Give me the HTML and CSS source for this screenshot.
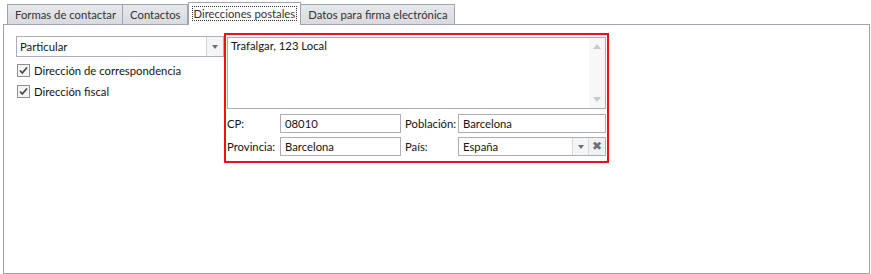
FILE: index.html
```html
<!DOCTYPE html>
<html lang="es">
<head>
    <meta charset="UTF-8">
    <meta name="viewport" content="width=device-width, initial-scale=1.0">
    <link rel="stylesheet" href="styles.css">
    <title>Direcciones postales</title>
</head>
<body>
    <div class="tabs">
        <div class="tab">Formas de contactar</div>
        <div class="tab">Contactos</div>
        <div class="tab active"><span class="focus">Direcciones postales</span></div>
        <div class="tab">Datos para firma electrónica</div>
    </div>

    <div class="panel">
        <div class="leftCol">
            <div class="combo">
                <div class="comboText">Particular</div>
                <div class="comboBtn"><span class="arrow"></span></div>
            </div>
            <label class="check">
                <svg width="13" height="13" viewBox="0 0 13 13">
                    <rect x="0.5" y="0.5" width="12" height="12" fill="#f4f4f4" stroke="#8e8f8f"/>
                    <path d="M3 6.5 L5.3 9 L10 3.5" fill="none" stroke="#4a4a4a" stroke-width="1.8"/>
                </svg>
                Dirección de correspondencia
            </label>
            <label class="check">
                <svg width="13" height="13" viewBox="0 0 13 13">
                    <rect x="0.5" y="0.5" width="12" height="12" fill="#f4f4f4" stroke="#8e8f8f"/>
                    <path d="M3 6.5 L5.3 9 L10 3.5" fill="none" stroke="#4a4a4a" stroke-width="1.8"/>
                </svg>
                Dirección fiscal
            </label>
        </div>

        <div class="addressBox">
            <div class="memo">
                <div class="memoText">Trafalgar, 123 Local</div>
                <div class="scroll">
                    <span class="up"></span>
                    <span class="down"></span>
                </div>
            </div>
            <div class="fields">
                <span class="lbl">CP:</span>
                <div class="field">08010</div>
                <span class="lbl lblRight">Población:</span>
                <div class="field">Barcelona</div>

                <span class="lbl">Provincia:</span>
                <div class="field">Barcelona</div>
                <span class="lbl lblRight">País:</span>
                <div class="field fieldCombo">
                    <div class="comboText">España</div>
                    <div class="comboBtn"><span class="arrow"></span></div>
                    <div class="clearBtn">&#x2716;</div>
                </div>
            </div>
        </div>
    </div>
</body>
</html>
```

FILE: styles.css
```css
:root {
    --border: #a0a5ad;
    --field-border: #abb0b8;
    --text: #141414;
}

body {
    margin: 0;
    background-color: white;
    font-family: 'Lato', 'Open Sans', sans-serif;
    font-size: 11.3px;
    color: var(--text);
}

.tabs {
    display: flex;
    align-items: flex-end;
    height: 24px;
    padding-left: 7px;
}

.tab {
    height: 20px;
    line-height: 19px;
    padding: 0 6px 0 7px;
    box-sizing: border-box;
    background: linear-gradient(#e6e8ec, #d7dbe0);
    border: 1px solid var(--border);
    border-bottom: none;
    color: #333;
    margin-right: -1px;
}

.tab.active {
    height: 23px;
    line-height: 21px;
    background: white;
    padding: 0 3px;
    margin-left: 1px;
    position: relative;
    top: 1px;
    z-index: 1;
}

.focus {
    border: 1px dotted #333;
    padding: 0 1px;
}

.panel {
    display: flex;
    margin-left: 3px;
    width: 867px;
    height: 250px;
    box-sizing: border-box;
    border: 1px solid var(--border);
    padding: 11px 0 0 12px;
}

.leftCol {
    width: 208px;
}

.combo {
    display: flex;
    height: 21px;
    box-sizing: border-box;
    border: 1px solid var(--field-border);
    margin-bottom: 3px;
}

.comboText {
    flex: 1;
    line-height: 19px;
    padding-left: 3px;
}

.comboBtn {
    width: 16px;
    border-left: 1px solid #d5d8dc;
    background: #f4f5f6;
    display: flex;
    align-items: center;
    justify-content: center;
}

.arrow {
    width: 0;
    height: 0;
    border-left: 3.5px solid transparent;
    border-right: 3.5px solid transparent;
    border-top: 4px solid #6b6e73;
}

.check {
    display: flex;
    align-items: center;
    gap: 4px;
    height: 21px;
    padding-left: 1px;
}

.addressBox {
    margin-top: -3px;
    width: 385px;
    height: 130px;
    box-sizing: border-box;
    border: 2px solid #ee1111;
    padding: 2px 1px 3px 1px;
}

.memo {
    display: flex;
    height: 72px;
    box-sizing: border-box;
    border: 1px solid var(--field-border);
}

.memoText {
    flex: 1;
    padding: 1px 3px;
}

.scroll {
    width: 16px;
    display: flex;
    flex-direction: column;
    justify-content: space-between;
    align-items: center;
    padding: 6px 0;
    background: #f7f7f8;
}

.up,
.down {
    width: 0;
    height: 0;
    border-left: 4px solid transparent;
    border-right: 4px solid transparent;
}

.up {
    border-bottom: 5px solid #c6c9cd;
}

.down {
    border-top: 5px solid #c6c9cd;
}

.fields {
    display: grid;
    grid-template-columns: 53px 121px 57px 1fr;
    grid-auto-rows: 19px;
    row-gap: 4px;
    margin-top: 5px;
}

.lbl {
    line-height: 19px;
}

.lblRight {
    padding-left: 4px;
}

.field {
    border: 1px solid var(--field-border);
    line-height: 17px;
    padding-left: 4px;
}

.fieldCombo {
    display: flex;
    padding-left: 0;
}

.fieldCombo .comboText {
    padding-left: 4px;
    line-height: 17px;
}

.fieldCombo .comboBtn {
    width: 15px;
}

.clearBtn {
    width: 16px;
    border-left: 1px solid #d5d8dc;
    background: #f0f1f2;
    color: #6b6e73;
    font-size: 12px;
    font-weight: bold;
    font-family: 'DejaVu Sans', sans-serif;
    text-align: center;
    line-height: 17px;
}
```
